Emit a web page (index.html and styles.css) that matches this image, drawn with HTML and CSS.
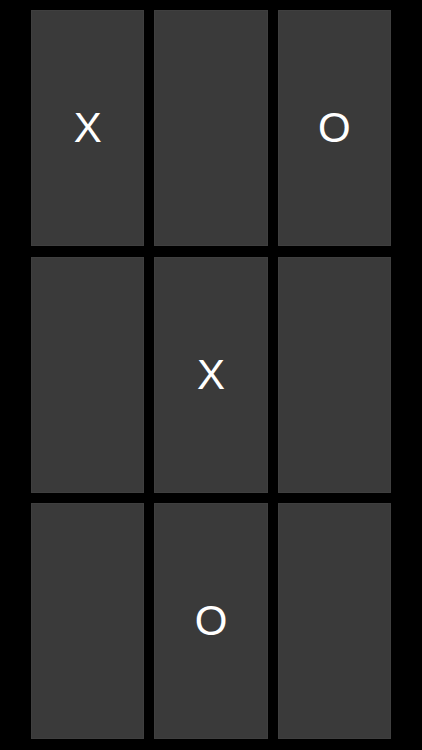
FILE: index.html
```html
<!DOCTYPE html>
<html>
<head>
<meta charset="utf-8">
<link rel="stylesheet" href="styles.css">
</head>
<body>
<div class="board">
  <div class="cell">X</div>
  <div class="cell"></div>
  <div class="cell">O</div>
  <div class="cell"></div>
  <div class="cell">X</div>
  <div class="cell"></div>
  <div class="cell"></div>
  <div class="cell">O</div>
  <div class="cell"></div>
</div>
</body>
</html>
```
FILE: styles.css
```css
html, body {
  margin: 0;
  padding: 0;
  background: #000;
  width: 422px;
  height: 750px;
  overflow: hidden;
}
.board {
  box-sizing: border-box;
  width: 422px;
  height: 750px;
  padding: 10px 31px 11px 31px;
  display: grid;
  grid-template-columns: repeat(3, 1fr);
  grid-template-rows: repeat(3, 1fr);
  gap: 10.5px 10px;
}
.cell {
  background: #3a3a3a;
  box-shadow: inset 0 0 0 1px #3f3f3f;
  display: flex;
  align-items: center;
  justify-content: center;
  color: #fff;
  font-family: "Liberation Sans", Arial, sans-serif;
  font-size: 42px;
  line-height: 1;
}
```
